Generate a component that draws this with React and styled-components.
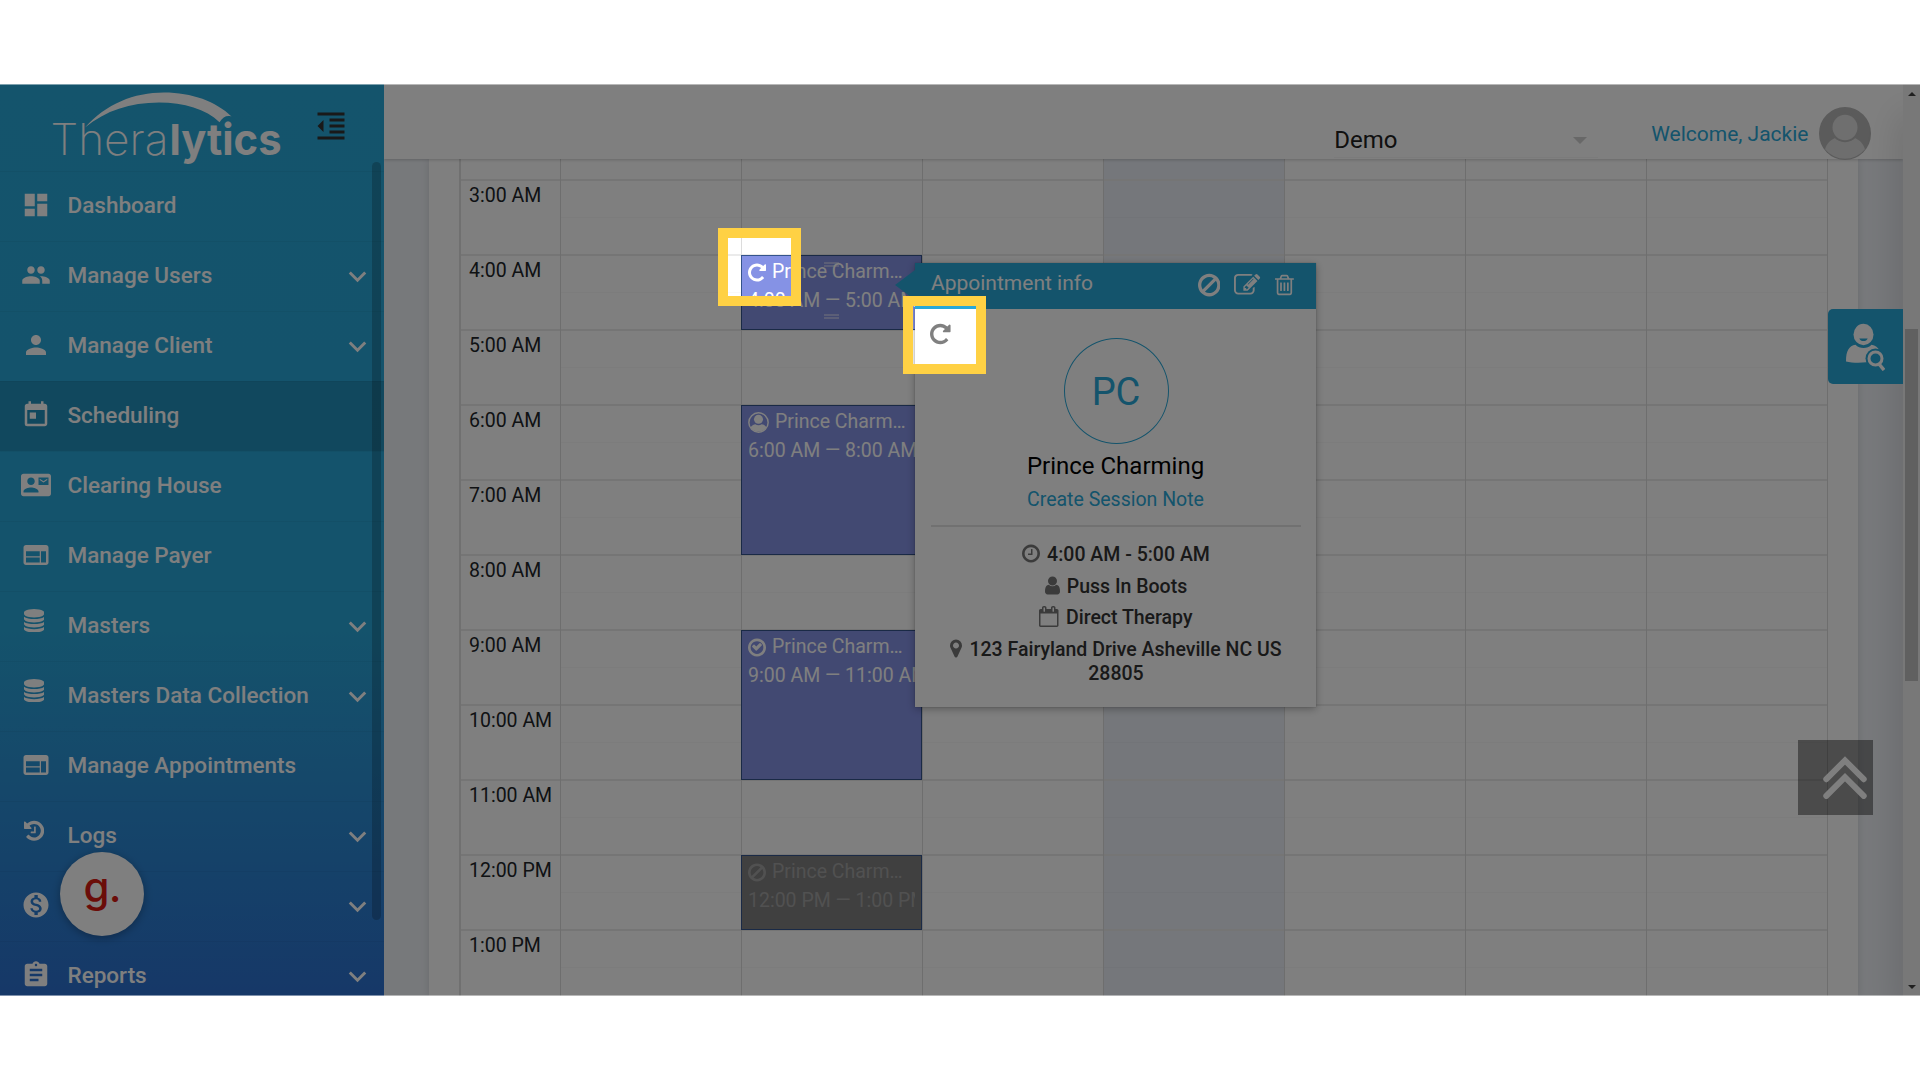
import React from "react";
import styled, { createGlobalStyle } from "styled-components";
import {
  MdAssignment,
  MdContactMail,
  MdDashboard,
  MdFormatIndentDecrease,
  MdKeyboardArrowDown,
  MdMonetizationOn,
  MdPeople,
  MdPerson,
  MdToday,
  MdWeb,
} from "react-icons/md";

const BLUE = "#29a8d8";

// Font Awesome 4 glyphs, [viewBox width, path]
const glyphs = {
  database: [
    1536,
    "M768 768q237 0 443-43t325-127v170q0 69-103 128t-280 93.5-385 34.5-385-34.5-280-93.5-103-128v-170q119 84 325 127t443 43zM768 1536q237 0 443-43t325-127v170q0 69-103 128t-280 93.5-385 34.5-385-34.5-280-93.5-103-128v-170q119 84 325 127t443 43zM768 1152q237 0 443-43t325-127v170q0 69-103 128t-280 93.5-385 34.5-385-34.5-280-93.5-103-128v-170q119 84 325 127t443 43zM768 0q208 0 385 34.5t280 93.5 103 128v128q0 69-103 128t-280 93.5-385 34.5-385-34.5-280-93.5-103-128v-128q0-69 103-128t280-93.5 385-34.5z",
  ],
  history: [
    1536,
    "M1536 896q0 156-61 298t-164 245-245 164-298 61q-172 0-327-72.5t-264-204.5q-7-10-6.5-22.5t8.5-20.5l137-138q10-9 25-9 16 2 23 12 73 95 179 147t225 52q104 0 198.5-40.5t163.5-109.5 109.5-163.5 40.5-198.5-40.5-198.5-109.5-163.5-163.5-109.5-198.5-40.5q-98 0-188 35.5t-160 101.5l137 138q31 30 14 69-17 40-59 40h-448q-26 0-45-19t-19-45v-448q0-42 40-59 39-17 69 14l130 129q107-101 244.5-156.5t284.5-55.5q156 0 298 61t245 164 164 245 61 298zM896 608v448q0 14-9 23t-23 9h-320q-14 0-23-9t-9-23v-64q0-14 9-23t23-9h224v-352q0-14 9-23t23-9h64q14 0 23 9t9 23z",
  ],
  repeat: [
    1536,
    "M1536 256v448q0 26-19 45t-45 19h-448q-42 0-59-40-17-39 14-69l138-138q-148-137-349-137-104 0-198.5 40.5t-163.5 109.5-109.5 163.5-40.5 198.5 40.5 198.5 109.5 163.5 163.5 109.5 198.5 40.5q119 0 225-52t179-147q7-10 23-12 15 0 25 9l137 138q9 8 9.5 20.5t-7.5 22.5q-109 132-264 204.5t-327 72.5q-156 0-298-61t-245-164-164-245-61-298 61-298 164-245 245-164 298-61q147 0 284.5 55.5t244.5 156.5l130-129q29-31 70-14 39 17 39 59z",
  ],
  clock: [
    1536,
    "M896 544v448q0 14-9 23t-23 9h-320q-14 0-23-9t-9-23v-64q0-14 9-23t23-9h224v-352q0-14 9-23t23-9h64q14 0 23 9t9 23zM1312 896q0-148-73-273t-198-198-273-73-273 73-198 198-73 273 73 273 198 198 273 73 273-73 198-198 73-273zM1536 896q0 209-103 385.5t-279.5 279.5-385.5 103-385.5-103-279.5-279.5-103-385.5 103-385.5 279.5-279.5 385.5-103 385.5 103 279.5 279.5 103 385.5z",
  ],
  check: [
    1536,
    "M1171 723l-422 422q-19 19-45 19t-45-19l-294-294q-19-19-19-45t19-45l102-102q19-19 45-19t45 19l147 147 275-275q19-19 45-19t45 19l102 102q19 19 19 45t-19 45zM1312 896q0-148-73-273t-198-198-273-73-273 73-198 198-73 273 73 273 198 198 273 73 273-73 198-198 73-273zM1536 896q0 209-103 385.5t-279.5 279.5-385.5 103-385.5-103-279.5-279.5-103-385.5 103-385.5 279.5-279.5 385.5-103 385.5 103 279.5 279.5 103 385.5z",
  ],
  ban: [
    1536,
    "M1312 893q0-161-87-295l-754 753q137 89 297 89 111 0 211.5-43.5t173.5-116.5 116-174.5 43-212.5zM313 1192l755-754q-135-91-300-91-148 0-273 73t-198 199-73 274q0 162 89 299zM1536 893q0 157-61 300t-163.5 246-245 164-298.5 61-298.5-61-245-164-163.5-246-61-300 61-299.5 163.5-245.5 245-164 298.5-61 298.5 61 245 164 163.5 245.5 61 299.5z",
  ],
  edit: [
    1792,
    "M888 1184l116-116-152-152-116 116v56h96v96h56zM1328 464q-16-16-33 1l-350 350q-17 17-1 33t33-1l350-350q17-17 1-33zM1408 1058v190q0 119-84.5 203.5t-203.5 84.5h-832q-119 0-203.5-84.5t-84.5-203.5v-832q0-119 84.5-203.5t203.5-84.5h832q63 0 117 25 15 7 18 23 3 17-9 29l-49 49q-14 14-32 8-23-6-45-6h-832q-66 0-113 47t-47 113v832q0 66 47 113t113 47h832q66 0 113-47t47-113v-126q0-13 9-22l64-64q15-15 35-7t20 29zM1312 320l288 288-672 672h-288v-288zM1756 452l-92 92-288-288 92-92q28-28 68-28t68 28l152 152q28 28 28 68t-28 68z",
  ],
  trash: [
    1408,
    "M512 736v576q0 14-9 23t-23 9h-64q-14 0-23-9t-9-23v-576q0-14 9-23t23-9h64q14 0 23 9t9 23zM768 736v576q0 14-9 23t-23 9h-64q-14 0-23-9t-9-23v-576q0-14 9-23t23-9h64q14 0 23 9t9 23zM1024 736v576q0 14-9 23t-23 9h-64q-14 0-23-9t-9-23v-576q0-14 9-23t23-9h64q14 0 23 9t9 23zM1152 1460v-948h-896v948q0 22 7 40.5t14.5 27 10.5 8.5h832q3 0 10.5-8.5t14.5-27 7-40.5zM480 384h448l-48-117q-7-9-17-11h-317q-10 2-17 11zM1408 416v64q0 14-9 23t-23 9h-96v948q0 83-47 143.5t-113 60.5h-832q-66 0-113-58.5t-47-141.5v-952h-96q-14 0-23-9t-9-23v-64q0-14 9-23t23-9h309l70-167q15-37 54-63t79-26h320q40 0 79 26t54 63l70 167h309q14 0 23 9t9 23z",
  ],
  user: [
    1280,
    "M1280 1399q0 109-62.5 187t-150.5 78h-854q-88 0-150.5-78t-62.5-187q0-85 8.5-160.5t31.5-152 58.5-131 94-89 134.5-34.5q131 128 313 128t313-128q76 0 134.5 34.5t94 89 58.5 131 31.5 152 8.5 160.5zM1024 512q0 159-112.5 271.5t-271.5 112.5-271.5-112.5-112.5-271.5 112.5-271.5 271.5-112.5 271.5 112.5 112.5 271.5z",
  ],
  calendar: [
    1664,
    "M128 1664h1408v-1024h-1408v1024zM512 448v-288q0-14-9-23t-23-9h-64q-14 0-23 9t-9 23v288q0 14 9 23t23 9h64q14 0 23-9t9-23zM1280 448v-288q0-14-9-23t-23-9h-64q-14 0-23 9t-9 23v288q0 14 9 23t23 9h64q14 0 23-9t9-23zM1664 384v1280q0 52-38 90t-90 38h-1408q-52 0-90-38t-38-90v-1280q0-52 38-90t90-38h128v-96q0-66 47-113t113-47h64q66 0 113 47t47 113v96h384v-96q0-66 47-113t113-47h64q66 0 113 47t47 113v96h128q52 0 90 38t38 90z",
  ],
  marker: [
    1024,
    "M768 640q0-106-75-181t-181-75-181 75-75 181 75 181 181 75 181-75 75-181zM1024 640q0 109-33 179l-364 774q-16 33-47.5 52t-67.5 19-67.5-19-46.5-52l-365-774q-33-70-33-179 0-212 150-362t362-150 362 150 150 362z",
  ],
};

const Glyph = ({ name, size = 21, className }) => {
  const [width, d] = glyphs[name];
  return (
    <svg
      className={className}
      width={(size * width) / 1792}
      height={size}
      viewBox={`0 0 ${width} 1792`}
      fill="currentColor"
      fillRule={name === "calendar" ? "evenodd" : "nonzero"}
    >
      <path d={d} />
    </svg>
  );
};

const PersonGlyph = () => (
  <svg width="21" height="21" viewBox="0 0 20 20">
    <circle cx="10" cy="10" r="9.2" fill="none" stroke="currentColor" strokeWidth="1.4" />
    <circle cx="10" cy="7" r="4.3" fill="currentColor" />
    <path
      d="M2.4 14.6c1.6-2.2 3.2-2.8 4.6-3 1.8 1.3 4.2 1.3 6 0 1.4.2 3 .8 4.6 3a9.2 9.2 0 0 1-15.2 0z"
      fill="currentColor"
    />
  </svg>
);

const menu = [
  { label: "Dashboard", icon: <MdDashboard /> },
  { label: "Manage Users", icon: <MdPeople />, open: true },
  { label: "Manage Client", icon: <MdPerson />, open: true },
  { label: "Scheduling", icon: <MdToday />, active: true },
  { label: "Clearing House", icon: <MdContactMail /> },
  { label: "Manage Payer", icon: <MdWeb /> },
  { label: "Masters", icon: <Glyph name="database" size={23.5} />, small: true, open: true },
  { label: "Masters Data Collection", icon: <Glyph name="database" size={23.5} />, small: true, open: true },
  { label: "Manage Appointments", icon: <MdWeb /> },
  { label: "Logs", icon: <Glyph name="history" size={23.5} />, small: true, open: true },
  { label: "", icon: <MdMonetizationOn />, open: true },
  { label: "Reports", icon: <MdAssignment />, open: true },
];

const hours = [
  "",
  "3:00 AM",
  "4:00 AM",
  "5:00 AM",
  "6:00 AM",
  "7:00 AM",
  "8:00 AM",
  "9:00 AM",
  "10:00 AM",
  "11:00 AM",
  "12:00 PM",
  "1:00 PM",
];

const days = [0, 1, 2, 3, 4, 5, 6];

// keyed by the hour label of the row where they start, all on the second day
const events = {
  "4:00 AM": { span: 1, time: "4:00 AM — 5:00 AM", icon: <Glyph name="repeat" />, handles: true },
  "6:00 AM": { span: 2, time: "6:00 AM — 8:00 AM", icon: <PersonGlyph /> },
  "9:00 AM": { span: 2, time: "9:00 AM — 11:00 AM", icon: <Glyph name="check" /> },
  "12:00 PM": { span: 1, time: "12:00 PM — 1:00 PM", icon: <Glyph name="ban" />, cancelled: true },
};

const Logo = () => (
  <svg width="240" height="84" viewBox="48 84 240 84" fill="#fff">
    <path d="M85 127.500C106 104 134 92.600 164 92.600c28 0 52 9 67.500 23.900-5-1.300-8.500.5-12 5.700C206 109 184 102.500 159 102.500c-29 0-53 8-74 25z" />
    <LogoText x="50.500" y="155" fontWeight="200" textLength="118" lengthAdjust="spacingAndGlyphs">
      Thera
    </LogoText>
    <LogoText x="169.500" y="155" fontWeight="700" textLength="112" lengthAdjust="spacingAndGlyphs">
      lytics
    </LogoText>
  </svg>
);

const Event = ({ span, time, icon, handles, cancelled }) => (
  <EventBox $span={span} $cancelled={cancelled}>
    <EventTitle>
      {icon}
      <span>Prince Charm…</span>
    </EventTitle>
    <EventTime>{time}</EventTime>
    {handles && <Handle $top={6} />}
    {handles && <Handle $top={58} />}
  </EventBox>
);

const App = () => {
  return (
    <>
      <GlobalStyle />
      <Screen>
        <Sidebar>
          <Brand>
            <Logo />
            <MdFormatIndentDecrease />
          </Brand>
          {menu.map(({ label, icon, open, active, small }, i) => (
            <MenuItem key={i} $active={active}>
              <MenuIcon $small={small}>{icon}</MenuIcon>
              <MenuLabel>{label}</MenuLabel>
              {open && <MdKeyboardArrowDown size={35} />}
            </MenuItem>
          ))}
          <SidebarThumb />
        </Sidebar>

        <Content>
          <TopBar>
            <ClinicSelect>
              Demo
              <Caret />
            </ClinicSelect>
            <Welcome>Welcome, Jackie</Welcome>
            <svg width="52" height="53" viewBox="0 0 52 52" preserveAspectRatio="none">
              <circle cx="26" cy="26" r="26" fill="#b6b6b6" />
              <path d="M6 41.500c2-6 5-8.500 10-11 6 5 14 5 20 0 5 2.500 8 5 10 11a26 26 0 0 1-40 0z" fill="#dcdcdc" />
              <circle cx="26" cy="20" r="14.500" fill="#b6b6b6" />
              <circle cx="26" cy="20" r="12.500" fill="#dedede" />
            </svg>
          </TopBar>
          <Page>
            <Card>
              <Calendar>
                {hours.map((hour, i) => (
                  <HourRow key={i}>
                    <HourLabel>{hour}</HourLabel>
                    {days.map((day) => (
                      <Slot key={day} $today={day === 3}>
                        {day === 1 && events[hour] && <Event {...events[hour]} />}
                      </Slot>
                    ))}
                  </HourRow>
                ))}
              </Calendar>
            </Card>
          </Page>
          <DrawerShadow />
        </Content>

        <Scrollbar>
          <Arrow />
          <ScrollThumb />
          <Arrow $down />
        </Scrollbar>

        <Popover>
          <PopoverHeader>
            <PopoverTitle>Appointment info</PopoverTitle>
            <Glyph name="ban" size={26.25} />
            <Glyph name="edit" size={26.25} />
            <Glyph name="trash" size={24} />
          </PopoverHeader>
          <PopoverBody>
            <RepeatMark>
              <Glyph name="repeat" size={24} />
            </RepeatMark>
            <Initials>PC</Initials>
            <ClientName>Prince Charming</ClientName>
            <NoteLink>Create Session Note</NoteLink>
            <Divider />
            <Detail>
              <Glyph name="clock" />4:00 AM - 5:00 AM
            </Detail>
            <Detail>
              <Glyph name="user" />Puss In Boots
            </Detail>
            <Detail>
              <Glyph name="calendar" />Direct Therapy
            </Detail>
            <Detail>
              <Glyph name="marker" />123 Fairyland Drive Asheville NC US 28805
            </Detail>
          </PopoverBody>
        </Popover>

        <SearchTab>
          <svg width="40" height="48" viewBox="0 0 40 48" fill="#fff">
            <ellipse cx="18.500" cy="11.500" rx="10" ry="10.700" />
            <path d="M14.300 15.500h8.400c-1 3.400-7.400 3.400-8.400 0z" fill={BLUE} />
            <path d="M1 38.500c0-11 3-15.500 9.500-16.700 4 4.300 12 4.300 16 0 4 .8 6.500 2.600 8 6l-13 11.500c-7 .8-15 .6-20.500-.8z" />
            <circle cx="30.500" cy="35.500" r="10" fill={BLUE} />
            <circle cx="30.500" cy="35.500" r="6.500" fill="none" stroke="#fff" strokeWidth="3" />
            <path d="M34 41l5 6" stroke="#fff" strokeWidth="3.500" />
          </svg>
        </SearchTab>

        <ScrollTop>
          <svg width="46" height="44" viewBox="0 0 46 44" fill="none" stroke="#fff" strokeWidth="6">
            <path d="M4.300 24.200L23 5.500l18.700 18.700M4.300 40.900L23 22.200l18.700 18.700" strokeLinecap="round" />
          </svg>
        </ScrollTop>

        <Badge>g.</Badge>
        <Dimmer />
        <Spotlight $x={718} $y={144} />
        <Spotlight $x={903} $y={212} />
      </Screen>
    </>
  );
};

const GlobalStyle = createGlobalStyle`
  * {
    box-sizing: border-box;
  }
  body {
    margin: 0;
    background: #fff;
    font-family: Roboto, "Liberation Sans", sans-serif;
    overflow: hidden;
  }
  svg {
    flex: none;
    display: block;
  }
`;

const Screen = styled.div`
  position: relative;
  display: flex;
  width: 1920px;
  height: 912px;
  margin: 84px 0;
  overflow: hidden;
`;

const Sidebar = styled.nav`
  position: relative;
  flex: 0 0 384px;
  color: #fff;
  overflow: hidden;
  background: linear-gradient(180deg, ${BLUE} 0%, #29a6d8 60%, #2c70d0 100%);
`;
const Brand = styled.div`
  display: flex;
  align-items: flex-start;
  height: 87px;
  padding-left: 48px;
  > svg:last-child {
    width: 36px;
    height: 36px;
    margin: 24px 0 0 25px;
    color: #333;
  }
`;
const LogoText = styled.text`
  font-family: Inter, Lato, sans-serif;
  font-size: 43px;
`;
const MenuItem = styled.div`
  display: flex;
  align-items: center;
  height: 70px;
  padding: 0 9px 0 21px;
  border-top: 1px solid rgba(0, 0, 0, 0.04);
  background: ${({ $active }) => ($active ? "rgba(0, 0, 0, 0.13)" : "transparent")};
`;
const MenuIcon = styled.span`
  width: 30px;
  margin-right: 16.5px;
  padding-left: ${({ $small }) => ($small ? "3px" : "0")};
  padding-bottom: ${({ $small }) => ($small ? "12px" : "3px")};
  font-size: 30px;
`;
const MenuLabel = styled.span`
  flex: 1;
  padding-bottom: 3px;
  font-size: 22.5px;
  font-weight: 500;
  white-space: nowrap;
`;
const SidebarThumb = styled.div`
  position: absolute;
  top: 78px;
  right: 3px;
  width: 9px;
  height: 758px;
  border-radius: 5px;
  background: rgba(0, 0, 0, 0.2);
`;

const Content = styled.main`
  position: relative;
  flex: 1;
  min-width: 0;
  display: flex;
  flex-direction: column;
  overflow: hidden;
`;
const TopBar = styled.header`
  position: relative;
  z-index: 3;
  flex: 0 0 75px;
  min-height: 0;
  height: 75px;
  display: flex;
  align-items: flex-start;
  padding: 23px 32.5px 0 0;
  justify-content: flex-end;
  background: #fff;
  box-shadow: 0 1px 3px rgba(0, 0, 0, 0.2);
`;
const ClinicSelect = styled.div`
  display: flex;
  align-items: center;
  justify-content: space-between;
  width: 264px;
  height: 51px;
  margin-right: 53px;
  padding: 16px 11px 0 0;
  border-bottom: 1px solid #f6f6f6;
  font-size: 24px;
  line-height: 34px;
  color: #212121;
`;
const Caret = styled.i`
  margin-top: 1px;
  border: 7px solid transparent;
  border-top-color: #d0d0d0;
  border-bottom: 0;
`;
const Welcome = styled.span`
  margin-right: 10px;
  font-size: 21px;
  line-height: 55px;
  color: ${BLUE};
`;
const Page = styled.div`
  flex: 1;
  overflow: hidden;
  padding: 0 45px 0 45px;
  background: #eff2f7;
`;
const Card = styled.div`
  display: flow-root;
  height: 100%;
  padding: 0 30px;
  background: #fff;
  box-shadow: 0 0 8px rgba(0, 0, 0, 0.12);
`;
const Calendar = styled.div`
  margin-top: -55px;
  border-left: 2px solid #e0e0e0;
`;
const HourRow = styled.div`
  display: flex;
  height: 75px;
`;
const HourLabel = styled.div`
  flex: 0 0 99px;
  padding: 3px 0 0 8px;
  border-top: 2px solid #ebebeb;
  font-size: 19.5px;
  line-height: 23px;
  color: #212529;
`;
const Slot = styled.div`
  position: relative;
  flex: 0 0 181px;
  border-top: 2px solid #ebebeb;
  background: ${({ $today }) => ($today ? "#ebeff6" : "transparent")};
  &::before {
    content: "";
    position: absolute;
    top: -2px;
    bottom: 0;
    left: 0;
    width: 1px;
    background: #dcdcdc;
  }
  &:last-child::before {
    box-shadow: 181px 0 #dcdcdc;
  }
  &::after {
    content: "";
    position: absolute;
    top: 36px;
    left: 1px;
    right: 0;
    height: 1px;
    background: rgba(0, 0, 0, 0.025);
  }
`;
const EventBox = styled.div`
  position: absolute;
  z-index: 1;
  top: -1px;
  left: 0;
  width: 181px;
  height: ${({ $span }) => $span * 75}px;
  padding: 2px 6px;
  overflow: hidden;
  border: 1px solid #34548c;
  background: ${({ $cancelled }) => ($cancelled ? "#808080" : "#8592e5")};
  color: ${({ $cancelled }) => ($cancelled ? "#a3a3a3" : "#fff")};
  font-size: 19.5px;
  line-height: 28.5px;
  white-space: nowrap;
`;
const EventTitle = styled.div`
  display: flex;
  align-items: center;
  gap: 6px;
`;
const EventTime = styled.div`
  overflow: hidden;
`;
const Handle = styled.i`
  position: absolute;
  top: ${({ $top }) => $top}px;
  left: 82px;
  width: 15px;
  height: 5px;
  border: solid rgba(255, 255, 255, 0.4);
  border-width: 2px 0;
`;
const DrawerShadow = styled.div`
  position: absolute;
  z-index: 4;
  top: 30px;
  bottom: -20px;
  right: -20px;
  width: 20px;
  box-shadow: 0 0 36px rgba(0, 0, 0, 0.2);
`;

const Scrollbar = styled.div`
  flex: 0 0 17px;
  display: flex;
  flex-direction: column;
  align-items: center;
  padding: 7px 0;
  background: #f1f1f1;
`;
const Arrow = styled.i`
  border: 4px solid transparent;
  border-${({ $down }) => ($down ? "top" : "bottom")}-color: #404040;
  border-${({ $down }) => ($down ? "bottom" : "top")}-width: 0;
  margin-top: ${({ $down }) => ($down ? "auto" : "1px")};
`;
const ScrollThumb = styled.div`
  width: 13px;
  height: 352px;
  margin-top: 233px;
  background: #c1c1c1;
`;

const Popover = styled.section`
  position: absolute;
  z-index: 5;
  top: 179px;
  left: 915px;
  width: 401px;
  height: 444px;
  background: #fff;
  box-shadow: 0 2px 8px rgba(0, 0, 0, 0.3), 0 0 1px rgba(0, 0, 0, 0.3);
`;
const PopoverHeader = styled.div`
  position: relative;
  display: flex;
  align-items: center;
  height: 46px;
  padding: 0 22.5px 2px 16px;
  gap: 14px;
  background: ${BLUE};
  color: #fff;
  &::before {
    content: "";
    position: absolute;
    top: 7px;
    left: -20px;
    border: solid transparent;
    border-width: 15px 20px 15px 0;
    border-right-color: ${BLUE};
  }
`;
const PopoverTitle = styled.span`
  flex: 1;
  padding-bottom: 4px;
  font-size: 21px;
`;
const PopoverBody = styled.div`
  position: relative;
  display: flex;
  flex-direction: column;
  align-items: center;
  padding: 29px 15.5px 0 16.5px;
  text-align: center;
`;
const RepeatMark = styled.span`
  position: absolute;
  top: 13px;
  left: 15px;
  color: #808080;
`;
const Initials = styled.div`
  width: 105px;
  height: 106px;
  border: 1.25px solid ${BLUE};
  border-radius: 50%;
  font-size: 38px;
  line-height: 107px;
  color: ${BLUE};
`;
const ClientName = styled.div`
  margin: 7px 1px 0 0;
  font-size: 24px;
  line-height: 30px;
  color: #000;
`;
const NoteLink = styled.a`
  margin: 5px 1px 0 0;
  font-size: 19.5px;
  line-height: 28px;
  color: ${BLUE};
`;
const Divider = styled.hr`
  width: 370px;
  height: 2px;
  margin: 11px 1px 16px 0;
  border: 0;
  background: #e2e2e2;
`;
const Detail = styled.div`
  width: 340px;
  margin-bottom: 7.5px;
  font-size: 19.5px;
  font-weight: 500;
  line-height: 24px;
  color: #333;
  svg {
    display: inline-block;
    margin-right: 7px;
    vertical-align: -3px;
    color: #777;
  }
`;

const SearchTab = styled.div`
  position: absolute;
  z-index: 5;
  top: 225px;
  right: 17px;
  width: 75px;
  height: 75px;
  padding: 14px 0 0 17px;
  border-radius: 5px 0 0 5px;
  background: ${BLUE};
`;
const ScrollTop = styled.div`
  position: absolute;
  z-index: 5;
  top: 656px;
  right: 47px;
  width: 75px;
  height: 75px;
  padding: 15px 0 0 24px;
  background: rgba(0, 0, 0, 0.41);
`;
const Badge = styled.div`
  position: absolute;
  z-index: 5;
  top: 768px;
  left: 60px;
  width: 84px;
  height: 84px;
  border-radius: 50%;
  background: #fff;
  box-shadow: 0 2px 8px rgba(0, 0, 0, 0.3);
  font: 500 42px/70px Inter, Roboto, sans-serif;
  letter-spacing: -1px;
  color: #d61b12;
  text-align: center;
`;

// Darkens the whole page except for the two highlighted squares
const Dimmer = styled.div`
  position: absolute;
  z-index: 10;
  inset: 0;
  background: rgba(0, 0, 0, 0.5);
  clip-path: path(
    evenodd,
    "M0 0H1920V912H0ZM723 149H796V217H723ZM908 217H981V285H908Z"
  );
  &::after {
    content: "";
    position: absolute;
    inset: 0;
    border: solid rgba(255, 255, 255, 0.45);
    border-width: 1px 0;
  }
`;
const Spotlight = styled.div`
  position: absolute;
  z-index: 11;
  top: ${({ $y }) => $y}px;
  left: ${({ $x }) => $x}px;
  width: 83px;
  height: 78px;
  border: 10px solid #ffd144;
`;

export default App;
